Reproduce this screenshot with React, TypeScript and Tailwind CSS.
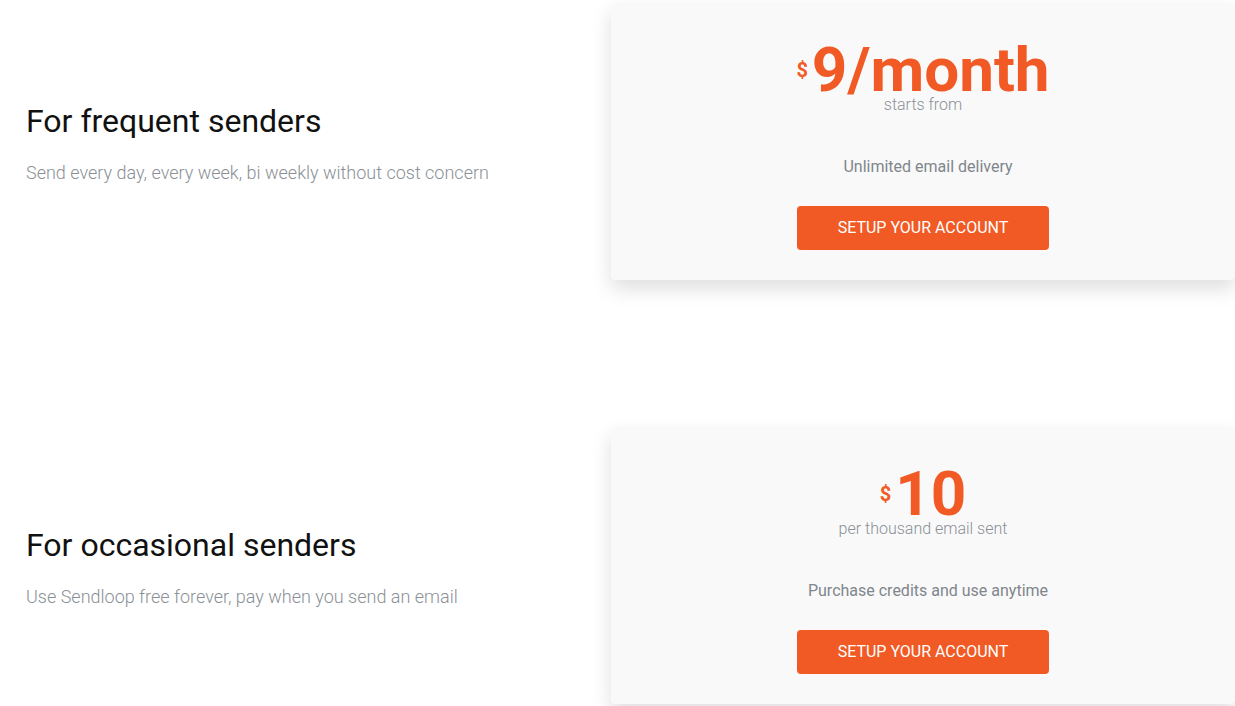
import React from "react";

type Plan = {
  title: string;
  subtitle: string;
  price: string;
  priceNote: string;
  feature: string;
};

const plans: Plan[] = [
  {
    title: "For frequent senders",
    subtitle: "Send every day, every week, bi weekly without cost concern",
    price: "9/month",
    priceNote: "starts from",
    feature: "Unlimited email delivery",
  },
  {
    title: "For occasional senders",
    subtitle: "Use Sendloop free forever, pay when you send an email",
    price: "10",
    priceNote: "per thousand email sent",
    feature: "Purchase credits and use anytime",
  },
];

function PlanRow({ plan }: { plan: Plan }) {
  return (
    <div className="flex items-center">
      <div className="w-[611px] shrink-0 pl-[26px] pt-[6px]">
        <h2 className="text-[32px] leading-[36px] font-normal text-[#111111]">{plan.title}</h2>
        <p className="mt-[20px] text-[18px] leading-[28px] font-light text-[#8a9096]">{plan.subtitle}</p>
      </div>
      <div className="flex-1 rounded-[4px] bg-[#f9f9f9] shadow-[0_9px_20px_rgba(0,0,0,0.13)] pt-[43px] pb-[30px] flex flex-col items-center">
        <div className="flex items-start text-[#f15a24]">
          <span className="text-[20px] leading-[20px] font-bold mt-[14px] mr-[4px]">$</span>
          <span className="text-[62px] leading-[48px] font-bold">{plan.price}</span>
        </div>
        <div className="mt-[2px] text-[16px] leading-[18px] font-light text-[#8a9096]">{plan.priceNote}</div>
        <div className="mt-[43px] pl-[10px] text-[16px] leading-[20px] font-normal text-[#7f868c]">{plan.feature}</div>
        <button className="mt-[29px] w-[252px] h-[44px] rounded-[4px] bg-[#f15a24] text-white text-[16px] font-normal uppercase">
          Setup your account
        </button>
      </div>
    </div>
  );
}

export default function App() {
  return (
    <div className="w-[1235px] min-h-[706px] bg-white pt-[3px] flex flex-col gap-[147px] overflow-hidden" style={{ fontFamily: "Roboto, 'Liberation Sans', sans-serif" }}>
      {plans.map((p) => (
        <PlanRow key={p.title} plan={p} />
      ))}
    </div>
  );
}
